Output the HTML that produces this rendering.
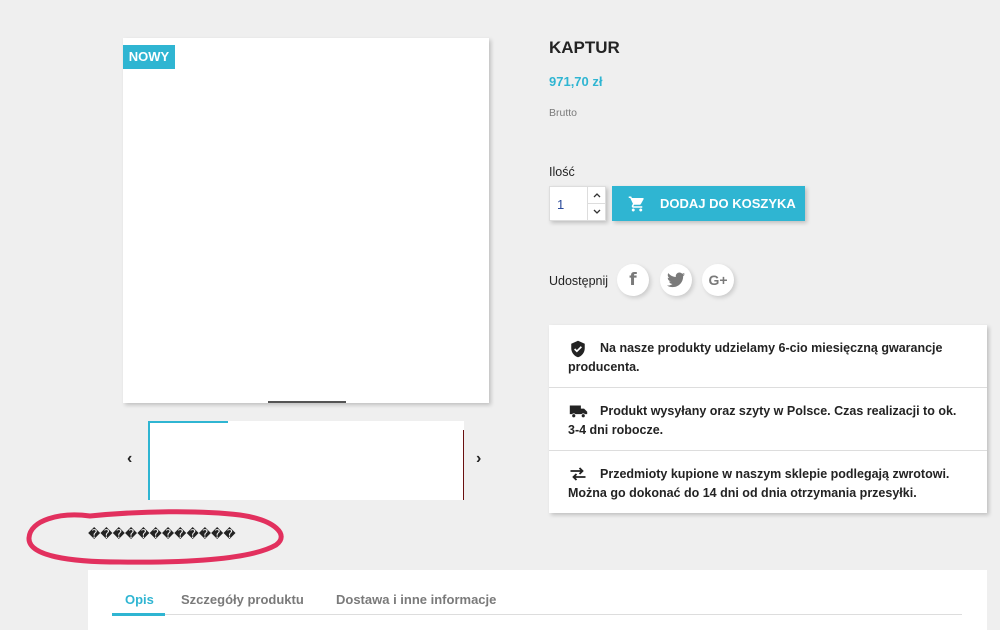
<!DOCTYPE html>
<html><head><meta charset="utf-8"><style>
body{margin:0;width:1000px;height:623px;background:#efefef;font-family:"Liberation Sans",sans-serif;position:relative;overflow:hidden;color:#232323}
.a{position:absolute}
.sh{box-shadow:2px 2px 4px rgba(0,0,0,.2)}
.rb{position:absolute;left:0;right:0;height:63px;border-bottom:1px solid #ddd;font-size:12.5px;font-weight:bold;line-height:19px;padding:0 14px 0 19px;box-sizing:border-box}
.rb svg{position:absolute;left:20px;top:15px}
.circ{position:absolute;width:32px;height:32px;border-radius:50%;background:#fff;box-shadow:2px 2px 4px rgba(0,0,0,.15);color:#7a7a7a;font-weight:bold;text-align:center;line-height:32px;font-size:17px}
</style></head><body>
<div class="a sh" style="left:123px;top:38px;width:366px;height:365px;background:#fff"></div>
<div class="a" style="left:268px;top:401px;width:78px;height:2px;background:#555"></div>
<div class="a" style="left:123px;top:45px;width:52px;height:24px;background:#2fb5d2;color:#fff;font-weight:bold;font-size:13px;line-height:24px;text-align:center">NOWY</div>
<div class="a" style="left:148px;top:421px;width:316px;height:79px;background:#fff"></div>
<div class="a" style="left:148px;top:421px;width:80px;height:79px;border:2px solid #2fb5d2;box-sizing:border-box;border-bottom:0;border-right:0"></div>
<div class="a" style="left:463px;top:430px;width:1px;height:70px;background:#6a1010"></div>
<div class="a" style="left:127px;top:450px;font-size:16px;font-weight:bold">‹</div>
<div class="a" style="left:476px;top:450px;font-size:16px;font-weight:bold">›</div>
<div class="a" style="left:88px;top:527px;font-size:12px">������������</div>
<svg class="a" style="left:0;top:0" width="1000" height="623"><path d="M90 516 C60 512 30 520 29 538 C28 556 70 562 120 562 C180 563 250 560 276 545 C290 535 275 520 240 515 C200 510 140 511 90 516 Z" fill="none" stroke="#e2305e" stroke-width="5"/></svg>
<div class="a" style="left:549px;top:38px;font-size:17px;font-weight:bold">KAPTUR</div>
<div class="a" style="left:549px;top:74px;font-size:13px;font-weight:bold;color:#2fb5d2">971,70 zł</div>
<div class="a" style="left:549px;top:107px;font-size:10.5px;color:#7a7a7a">Brutto</div>
<div class="a" style="left:549px;top:165px;font-size:12.5px">Ilość</div>
<div class="a sh" style="left:549px;top:186px;width:57px;height:35px;background:#fff;border:1px solid #ddd;box-sizing:border-box"></div>
<div class="a" style="left:587px;top:186px;width:1px;height:35px;background:#ddd"></div>
<div class="a" style="left:587px;top:203px;width:19px;height:1px;background:#ddd"></div>
<div class="a" style="left:557px;top:197px;font-size:13px;color:#2a4a9a">1</div>
<svg class="a" style="left:592px;top:191px" width="10" height="26"><path d="M2 6l3-3 3 3M2 19l3 3 3-3" fill="none" stroke="#333" stroke-width="1.3"/></svg>
<div class="a sh" style="left:612px;top:186px;width:193px;height:35px;background:#2fb5d2;color:#fff;font-weight:bold;font-size:13px;line-height:35px">
<svg style="position:absolute;left:16px;top:9px" width="18" height="18" viewBox="0 0 24 24"><path fill="#fff" d="M7 18c-1.1 0-2 .9-2 2s.9 2 2 2 2-.9 2-2-.9-2-2-2zM1 2v2h2l3.6 7.6-1.4 2.4c-.1.3-.2.6-.2 1 0 1.1.9 2 2 2h12v-2H7.4c-.1 0-.2-.1-.2-.2v-.1l.9-1.7h7.4c.8 0 1.4-.4 1.700-1l3.6-6.5c.1-.2.1-.3.1-.5 0-.6-.4-1-1-1H5.2l-.9-2H1zm16 16c-1.1 0-2 .9-2 2s.9 2 2 2 2-.9 2-2-.9-2-2-2z"/></svg>
<span style="position:absolute;left:48px">DODAJ DO KOSZYKA</span></div>
<div class="a" style="left:549px;top:274px;font-size:12.5px">Udostępnij</div>
<div class="circ" style="left:617px;top:264px;font-family:'DejaVu Sans'">f</div>
<div class="circ" style="left:660px;top:264px"><svg width="18" height="16" viewBox="0 0 24 20" style="margin-top:8px"><path fill="#7a7a7a" d="M24 2.4c-.9.4-1.8.7-2.8.8 1-.6 1.8-1.6 2.2-2.7-1 .6-2 1-3.1 1.2C19.3.7 18 0 16.6 0c-2.7 0-4.9 2.2-4.9 4.9 0 .4 0 .8.1 1.1C7.7 5.800 4.1 3.9 1.7.9c-.4.7-.7 1.6-.7 2.5 0 1.7.9 3.2 2.2 4.1-.8 0-1.6-.2-2.2-.6v.1c0 2.4 1.7 4.4 3.9 4.8-.4.1-.8.2-1.3.2-.3 0-.6 0-.9-.1.6 2 2.4 3.4 4.6 3.4-1.7 1.3-3.800 2.1-6.1 2.1-.4 0-.8 0-1.2-.1 2.2 1.4 4.8 2.2 7.5 2.2 9.1 0 14-7.5 14-14v-.6c1-.7 1.8-1.6 2.5-2.500z"/></svg></div>
<div class="circ" style="left:702px;top:264px;font-size:14px">G+</div>
<div class="a sh" style="left:549px;top:325px;width:438px;height:188px;background:#fff">
<div class="rb" style="top:0;padding-top:14px"><svg width="18" height="18" viewBox="0 0 24 24"><path d="M12 1L3 5v6c0 5.5 3.8 10.7 9 12 5.2-1.3 9-6.5 9-12V5z" fill="#232323"/><path d="M7.5 12l3 3 6-6" fill="none" stroke="#fff" stroke-width="2.2"/></svg><span style="padding-left:32px">Na nasze produkty udzielamy 6-cio miesięczną gwarancje</span><br>producenta.</div>
<div class="rb" style="top:63px;padding-top:14px"><svg width="19" height="16" viewBox="0 0 24 20"><path d="M1 3h14v11H1zM15 7h4l4 4v3h-8z" fill="#232323"/><circle cx="6" cy="16" r="2.5" fill="#232323" stroke="#fff"/><circle cx="18" cy="16" r="2.5" fill="#232323" stroke="#fff"/></svg><span style="padding-left:32px">Produkt wysyłany oraz szyty w Polsce. Czas realizacji to ok.</span><br>3-4 dni robocze.</div>
<div class="rb" style="top:126px;padding-top:14px;border:0"><svg width="18" height="16" viewBox="0 0 24 20"><path d="M2 6h16M14 2l4 4-4 4M22 14H6M10 10l-4 4 4 4" fill="none" stroke="#232323" stroke-width="2.4"/></svg><span style="padding-left:32px">Przedmioty kupione w naszym sklepie podlegają zwrotowi.</span><br>Można go dokonać do 14 dni od dnia otrzymania przesyłki.</div>
</div>
<div class="a" style="left:88px;top:570px;width:899px;height:60px;background:#fff"></div>
<div class="a" style="left:112px;top:614px;width:850px;height:1px;background:#ddd"></div>
<div class="a" style="left:112px;top:613px;width:53px;height:3px;background:#2fb5d2"></div>
<div class="a" style="left:125px;top:592px;font-size:13px;font-weight:bold;color:#2fb5d2">Opis</div>
<div class="a" style="left:181px;top:592px;font-size:13px;font-weight:bold;color:#7a7a7a">Szczegóły produktu</div>
<div class="a" style="left:336px;top:592px;font-size:13px;font-weight:bold;color:#7a7a7a">Dostawa i inne informacje</div>
</body></html>
